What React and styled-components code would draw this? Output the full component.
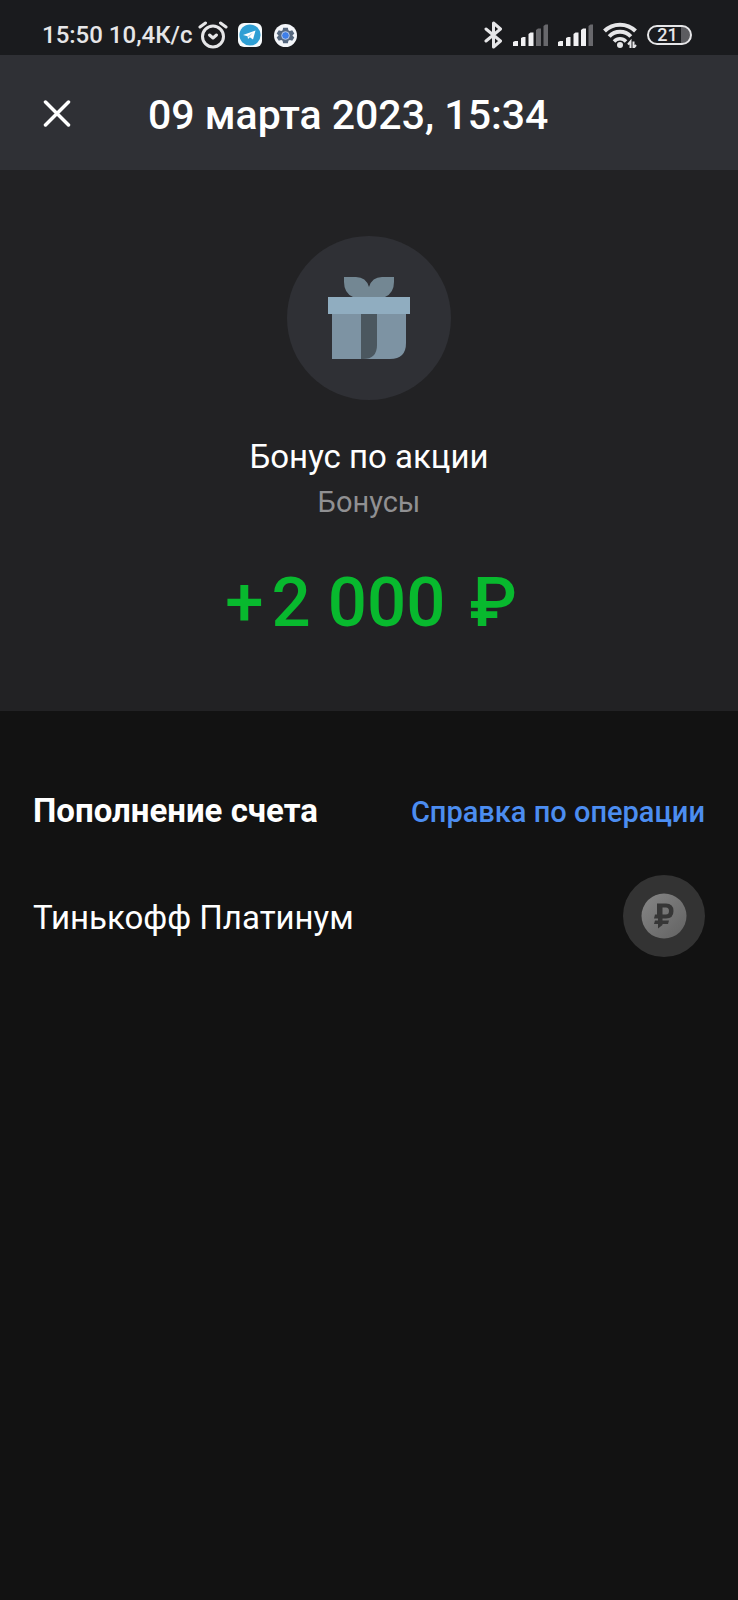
import React from 'react';
import styled, { createGlobalStyle } from 'styled-components';

const SIGNALS = [
  { id: 'sim1', level: 3 },
  { id: 'sim2', level: 4 },
];

const BARS = [
  'M0 18 L2 17 H5 V22 H0 Z',
  'M8 14 L10 13 H12.5 V22 H8 Z',
  'M15.5 10 L17.5 8.5 H20.5 V22 H15.5 Z',
  'M23 6 L25 4.5 H28 V22 H23 Z',
  'M30.5 2 L32.5 0.5 H35 V22 H30.5 Z',
];

const AlarmIcon = () => (
  <svg width="30" height="28" viewBox="0 0 30 28" fill="none" stroke="#e6e6e8" strokeLinecap="round">
    <circle cx="15" cy="15.5" r="10.5" strokeWidth="3" />
    <path d="M2 6 L7.5 2 M28 6 L22.5 2" strokeWidth="3" />
    <path d="M11.5 14 L15 17 L18.5 14" strokeWidth="3" strokeLinejoin="round" />
  </svg>
);

const TelegramIcon = () => (
  <svg width="24" height="24" viewBox="0 0 24 24">
    <rect width="24" height="24" rx="6" fill="#f7fbfd" />
    <circle cx="12" cy="12" r="10.6" fill="#2f9fd4" />
    <path d="M5 12 L17.5 7.5 L15 16.5 L11.8 14.2 L10 16 L9.6 13.2 Z" fill="#fff" />
    <path d="M9.6 13.2 L15 9.5 L11 14 Z" fill="#a9d3ea" />
  </svg>
);

const GearIcon = () => (
  <svg width="23" height="23" viewBox="0 0 24 24">
    <circle cx="12" cy="12" r="12" fill="#f4f6fa" />
    <path
      d="M9.5 4h5l.5 2.4 1.5.8L19 6.5l2.2 3.5-2 2 2 2-2.2 3.5-2.5-.7-1.5.8-.5 2.4h-5L9 17.6l-1.5-.8-2.5.7L2.8 14l2-2-2-2L5 6.5l2.5.7L9 6.4z"
      fill="#56687f"
    />
    <circle cx="12" cy="12" r="4" fill="#3f7fe8" stroke="#b9cbe8" strokeWidth="1" />
  </svg>
);

const BluetoothIcon = () => (
  <svg
    width="19"
    height="28"
    viewBox="0 0 19 28"
    fill="none"
    stroke="#e6e6e8"
    strokeWidth="3"
    strokeLinecap="round"
    strokeLinejoin="round"
  >
    <path d="M2 8 L16.5 20 L9.5 26 V2 L16.5 8 L2 20" />
  </svg>
);

const SignalIcon = ({ level }) => (
  <svg width="35" height="22" viewBox="0 0 35 22">
    {BARS.map((d, idx) => (
      <path key={d} d={d} fill={idx < level ? '#f0f0f2' : '#68686c'} />
    ))}
  </svg>
);

const WifiIcon = () => (
  <svg width="34" height="26" viewBox="0 0 34 26" fill="none" stroke="#e6e6e8">
    <path d="M1.5 9 C10 .5 24 .5 32.5 9" strokeWidth="4" />
    <path d="M6.2 14.5 C12 8.2 22 8.2 27.8 14.5" strokeWidth="4" />
    <path d="M11 19.5 C14.5 15.8 19.5 15.8 23 19.5" strokeWidth="3.5" />
    <circle cx="17" cy="23" r="3" fill="#e6e6e8" stroke="none" />
    <path d="M27.5 26 V19.5 L25 22.5 M30.5 19.5 V26 L33 23" strokeWidth="2" />
  </svg>
);

const CloseIcon = () => (
  <svg width="28" height="28" viewBox="0 0 28 28" fill="none" stroke="#fff" strokeWidth="3.5" strokeLinecap="round">
    <path d="M2.5 2 L25.5 25 M25.5 2 L2.5 25" />
  </svg>
);

const GiftIcon = () => (
  <svg width="82" height="82" viewBox="0 0 82 82">
    <path d="M16 0 H28 Q38 0 41 10 Q44 0 54 0 H66 V5 Q66 16 57 20 H25 Q16 16 16 5 Z" fill="#738793" />
    <rect y="20" width="82" height="17" fill="#90adc0" />
    <path d="M4 37 H78 V66 Q78 82 62 82 H4 Z" fill="#7d93a3" />
    <path d="M33 37 H49 V68 Q49 82 35 82 H33 Z" fill="#4b575f" />
  </svg>
);

const RubleCoin = () => (
  <svg width="46" height="46" viewBox="0 0 46 46">
    <defs>
      <linearGradient id="coin" x1="0" y1="0" x2="1" y2="1">
        <stop offset="0" stopColor="#868686" />
        <stop offset="1" stopColor="#626262" />
      </linearGradient>
    </defs>
    <circle cx="23" cy="23" r="22.5" fill="url(#coin)" />
    <path
      d="M16 10.5 H25 Q32.5 10.5 32.5 18 Q32.5 25.5 25 25.5 H21.5 V27.5 H28 L27 31 H21.5 V32 L17 35.5 V31 H13 L14 27.5 H17 V25.5 H13 L14 21.5 H16 Z M21.5 14.5 V21.5 H25 Q28 21.5 28 18 Q28 14.5 25 14.5 Z"
      fill="#363636"
      fillRule="evenodd"
    />
  </svg>
);

const App = () => (
  <Page>
    <GlobalStyle />
    <StatusBar>
      <StatusGroup>
        <StatusText>15:50 10,4К/с</StatusText>
        <AlarmIcon />
        <AppIcons>
          <TelegramIcon />
          <GearIcon />
        </AppIcons>
      </StatusGroup>
      <StatusGroup gap={10}>
        <BluetoothIcon />
        {SIGNALS.map(({ id, level }) => (
          <SignalIcon key={id} level={level} />
        ))}
        <WifiIcon />
        <Battery>21</Battery>
      </StatusGroup>
    </StatusBar>
    <Header>
      <CloseButton type="button" aria-label="Закрыть">
        <CloseIcon />
      </CloseButton>
      <Title>09 марта 2023, 15:34</Title>
    </Header>
    <Summary>
      <GiftCircle>
        <GiftIcon />
      </GiftCircle>
      <OperationName>Бонус по акции</OperationName>
      <Category>Бонусы</Category>
      <Amount>
        <span>+</span>
        <span>2 000</span>
        <Currency>₽</Currency>
      </Amount>
    </Summary>
    <Details>
      <DetailsHeader>
        <DetailsTitle>Пополнение счета</DetailsTitle>
        <HelpLink href="#help">Справка по операции</HelpLink>
      </DetailsHeader>
      <Account>
        <AccountName>Тинькофф Платинум</AccountName>
        <CoinCircle>
          <RubleCoin />
        </CoinCircle>
      </Account>
    </Details>
  </Page>
);

export default App;

const GlobalStyle = createGlobalStyle`
  * {
    box-sizing: border-box;
  }

  body {
    margin: 0;
    background: #121212;
    color: #fff;
    font-family: Roboto, 'Noto Sans', sans-serif;
  }

  h1, h2, p {
    margin: 0;
  }

  svg {
    display: block;
    flex-shrink: 0;
  }
`;

const Page = styled.main`
  min-height: 100vh;
`;

const StatusBar = styled.div`
  display: flex;
  justify-content: space-between;
  align-items: center;
  padding: 20px 46px 5px 42px;
  background: #1a1b1e;
`;

const StatusGroup = styled.div`
  display: flex;
  align-items: center;
  gap: ${({ gap }) => gap || 5}px;
`;

const StatusText = styled.span`
  font-size: 24px;
  line-height: 30px;
  font-weight: 500;
  color: #e6e6e8;
`;

const AppIcons = styled.div`
  display: flex;
  align-items: center;
  gap: 12px;
  padding-left: 5px;
`;

const Battery = styled.span`
  display: flex;
  align-items: center;
  justify-content: center;
  width: 45px;
  height: 20px;
  padding-right: 4px;
  border: 2px solid #e6e6e8;
  border-radius: 10px;
  background: linear-gradient(to right, transparent 32px, #5c5c60 32px);
  color: #e6e6e8;
  font-size: 18px;
  line-height: 16px;
  font-weight: 500;
`;

const Header = styled.header`
  display: flex;
  align-items: center;
  gap: 66px;
  padding: 32px 32px 27px;
  background: #2f3035;
`;

const CloseButton = styled.button`
  padding: 10px 11px 12px;
  border: none;
  background: none;
  cursor: pointer;
`;

const Title = styled.h1`
  font-size: 41px;
  line-height: 56px;
  font-weight: 500;
`;

const Summary = styled.section`
  display: flex;
  flex-direction: column;
  align-items: center;
  padding: 66px 32px;
  background: #222224;
`;

const GiftCircle = styled.div`
  display: flex;
  align-items: center;
  justify-content: center;
  width: 164px;
  height: 164px;
  border-radius: 50%;
  background: #2f3035;
`;

const OperationName = styled.p`
  margin-top: 37px;
  font-size: 33px;
  line-height: 40px;
`;

const Category = styled.p`
  margin-top: 7px;
  font-size: 29px;
  line-height: 36px;
  color: #909092;
`;

const Amount = styled.p`
  display: flex;
  gap: 8px;
  margin-top: 41px;
  padding-left: 4px;
  font-size: 69px;
  line-height: 84px;
  font-weight: 500;
  color: #08b92e;
`;

const Currency = styled.span`
  margin-left: 16px;
`;

const Details = styled.section`
  padding: 80px 33px;
`;

const DetailsHeader = styled.div`
  display: flex;
  justify-content: space-between;
  align-items: baseline;
`;

const DetailsTitle = styled.h2`
  font-size: 33px;
  line-height: 40px;
  font-weight: 700;
`;

const HelpLink = styled.a`
  font-size: 29px;
  line-height: 40px;
  font-weight: 500;
  color: #4c8df0;
  text-decoration: none;
`;

const Account = styled.div`
  display: flex;
  justify-content: space-between;
  align-items: center;
  margin-top: 43px;
`;

const AccountName = styled.p`
  padding-top: 3px;
  font-size: 33px;
  line-height: 40px;
`;

const CoinCircle = styled.div`
  display: flex;
  align-items: center;
  justify-content: center;
  width: 82px;
  height: 82px;
  border-radius: 50%;
  background: #333;
`;
